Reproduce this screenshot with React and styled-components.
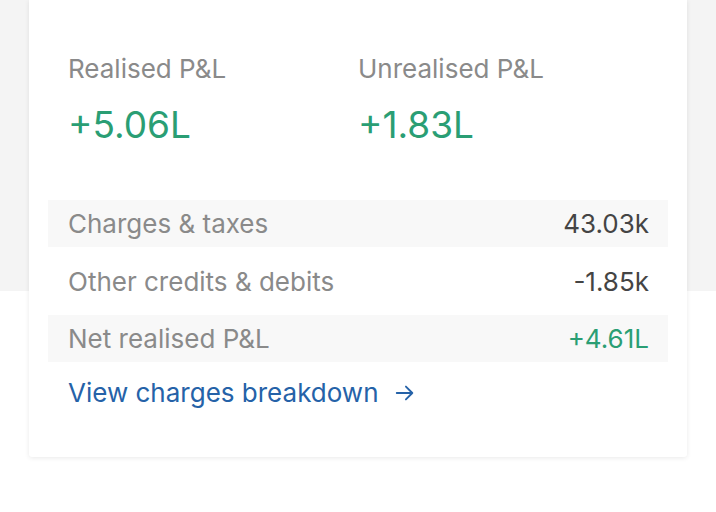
import React from "react";
import styled, { createGlobalStyle } from "styled-components";

const summary = [
  { label: "Realised P&L", value: "+5.06L" },
  { label: "Unrealised P&L", value: "+1.83L" },
];

const rows = [
  { label: "Charges & taxes", value: "43.03k", shaded: true },
  { label: "Other credits & debits", value: "-1.85k" },
  { label: "Net realised P&L", value: "+4.61L", shaded: true, positive: true },
];

function App() {
  return (
    <>
      <GlobalStyle />
      <Page>
        <Card>
          <SummaryGrid>
            {summary.map((s) => (
              <SummaryItem key={s.label}>
                <SummaryLabel>{s.label}</SummaryLabel>
                <SummaryValue>{s.value}</SummaryValue>
              </SummaryItem>
            ))}
          </SummaryGrid>
          <RowList>
            {rows.map((r) => (
              <Row key={r.label} $shaded={r.shaded}>
                <RowLabel>{r.label}</RowLabel>
                <RowValue $positive={r.positive}>{r.value}</RowValue>
              </Row>
            ))}
          </RowList>
          <BreakdownLink href="#">
            View charges breakdown
            <svg width="22" height="22" viewBox="0 0 24 24" fill="none">
              <path
                d="M3 12h17M13 5l7 7-7 7"
                stroke="currentColor"
                strokeWidth="2"
                strokeLinecap="round"
                strokeLinejoin="round"
              />
            </svg>
          </BreakdownLink>
        </Card>
      </Page>
    </>
  );
}

const GlobalStyle = createGlobalStyle`
  body {
    margin: 0;
    font-family: Inter, "Noto Sans", sans-serif;
    background: #fff;
  }
`;

const Page = styled.div`
  min-height: 512px;
  padding: 0 29px;
  background: linear-gradient(#f4f4f4 0, #f4f4f4 291px, #fff 291px);
`;

const Card = styled.div`
  width: 658px;
  box-sizing: border-box;
  background: #fff;
  padding: 52px 19px 47px;
  border-radius: 0 0 3px 3px;
  box-shadow: 0 1px 5px rgba(0, 0, 0, 0.09);
`;

const SummaryGrid = styled.div`
  display: grid;
  grid-template-columns: 1fr 1fr;
  padding: 0 20px;
`;

const SummaryItem = styled.div`
  display: flex;
  flex-direction: column;
  gap: 17px;
`;

const SummaryLabel = styled.div`
  font-size: 26px;
  line-height: 34px;
  color: #8a8a8a;
`;

const SummaryValue = styled.div`
  font-size: 37px;
  line-height: 44px;
  color: #2a9e74;
`;

const RowList = styled.div`
  display: flex;
  flex-direction: column;
  gap: 10.5px;
  margin-top: 53px;
`;

const Row = styled.div`
  display: flex;
  align-items: center;
  justify-content: space-between;
  height: 47px;
  padding: 0 19px 0 20px;
  background: ${(p) => (p.$shaded ? "#f8f8f8" : "transparent")};
`;

const RowLabel = styled.span`
  font-size: 26px;
  color: #8a8a8a;
`;

const RowValue = styled.span`
  font-size: 26px;
  color: ${(p) => (p.$positive ? "#2a9e74" : "#444")};
`;

const BreakdownLink = styled.a`
  display: flex;
  align-items: center;
  gap: 15px;
  margin-top: 14px;
  padding: 0 20px;
  font-size: 26px;
  line-height: 34px;
  color: #2562a8;
  text-decoration: none;
`;

export default App;
